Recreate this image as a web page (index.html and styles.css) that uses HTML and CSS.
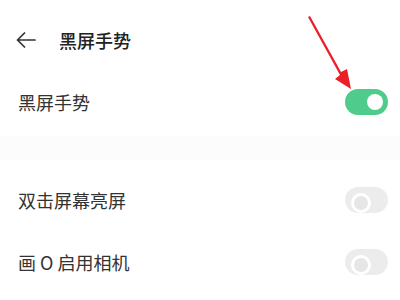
FILE: index.html
```html
<!DOCTYPE html>
<html lang="zh-CN">
<head>
    <meta charset="UTF-8">
    <meta name="viewport" content="width=device-width, initial-scale=1.0">
    <title>黑屏手势</title>
    <link rel="stylesheet" href="styles.css">
</head>
<body>
    <div class="page">
        <div class="top-bar">
            <svg class="back-icon" width="20" height="16" viewBox="0 0 20 16">
                <path d="M19 8H1.5M8.5 1L1.5 8l7 7" fill="none" stroke="#333" stroke-width="1.7" stroke-linecap="round" stroke-linejoin="round"/>
            </svg>
            <h1 class="top-title">黑屏手势</h1>
        </div>

        <div class="setting-row main-row">
            <span class="setting-name">黑屏手势</span>
            <span class="switch on"></span>
        </div>

        <div class="group-gap"></div>

        <div class="setting-group">
            <div class="setting-row">
                <span class="setting-name">双击屏幕亮屏</span>
                <span class="switch"></span>
            </div>
            <div class="setting-row">
                <span class="setting-name">画 O 启用相机</span>
                <span class="switch"></span>
            </div>
        </div>

        <!-- 标注箭头 -->
        <svg class="pointer-arrow" width="60" height="80" viewBox="0 0 60 80">
            <path d="M8 4 L10 3 L41 59 L47 56 L51 76 L35 66 L40 62 Z" fill="#ea1f27"/>
        </svg>
    </div>
</body>
</html>
```

FILE: styles.css
```css
* {
    margin: 0;
    padding: 0;
    box-sizing: border-box;
}

body {
    font-family: "Noto Sans CJK SC", "Noto Sans", sans-serif;
    background: #fff;
    color: #333;
}

.page {
    position: relative;
    width: 400px;
    height: 300px;
    overflow: hidden;
}

.top-bar {
    display: flex;
    align-items: center;
    height: 56px;
    margin-top: 12px;
    padding-left: 16px;
}

.back-icon {
    margin-right: 23px;
}

.top-title {
    font-size: 18px;
    font-weight: 500;
    color: #222;
}

.setting-row {
    display: flex;
    align-items: center;
    justify-content: space-between;
    height: 62px;
    padding: 0 12px 0 18px;
}

.main-row {
    height: 68px;
}

.setting-name {
    font-size: 18px;
    color: #333;
}

.group-gap {
    height: 24px;
    background: #fcfcfc;
}

.setting-group {
    padding-top: 9px;
}

.switch {
    position: relative;
    width: 43px;
    height: 26px;
    border-radius: 13px;
    background: #ececec;
}

.switch::after {
    content: "";
    position: absolute;
    top: 6px;
    left: 6px;
    width: 14px;
    height: 14px;
    border-radius: 50%;
    border: 3px solid #fff;
    background: #e6e6e6;
}

.switch.on {
    background: #4fcb8b;
}

.switch.on::after {
    top: 5px;
    left: auto;
    right: 5px;
    width: 16px;
    height: 16px;
    border: none;
    background: #fff;
}

.pointer-arrow {
    position: absolute;
    left: 300px;
    top: 13px;
}
```
